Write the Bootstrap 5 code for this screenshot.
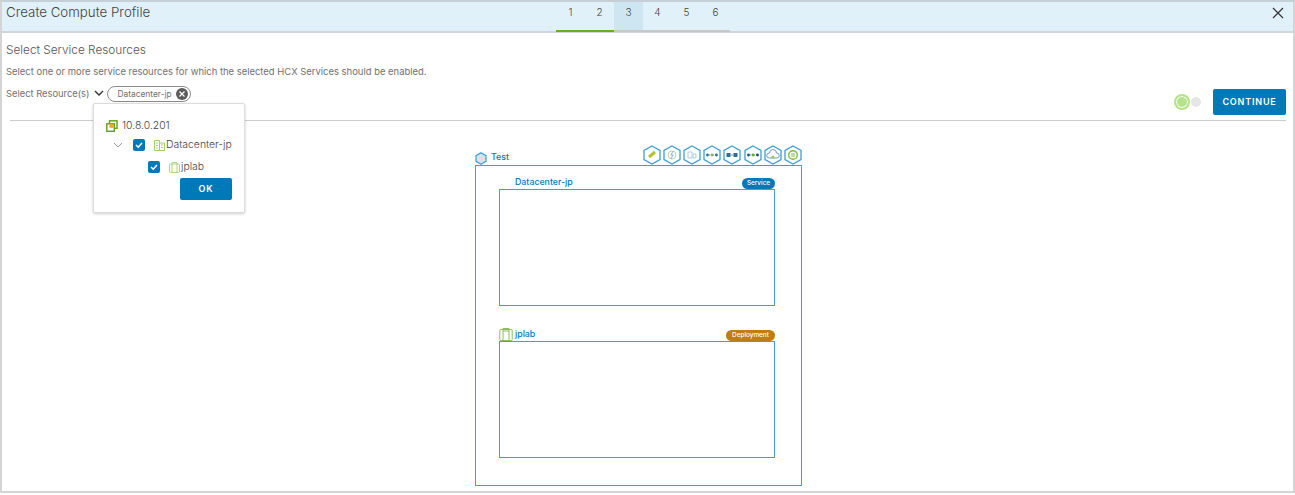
<!DOCTYPE html>
<html lang="en">
<head>
  <meta charset="UTF-8" />
  <title>Create Compute Profile</title>
  <link href="https://cdn.jsdelivr.net/npm/bootstrap@5.3.2/dist/css/bootstrap.min.css" rel="stylesheet" />
  <style>
    body {
      font-family: "Inter", "Open Sans", sans-serif;
      color: #565656;
      background: #fff;
      height: 495px;
      overflow: hidden;
    }

    .wiz-frame {
      height: 493px;
      border: 2px solid #d4d4d4;
      border-top-color: #c6ced6;
      position: relative;
    }

    .wiz-head {
      height: 29px;
      background: #e1f1f9;
      border-bottom: 2px solid #d0d6da;
      box-sizing: content-box;
    }

    .wiz-title {
      width: 554px;
      padding-left: 4px;
      font-size: 13.3px;
      font-weight: 300;
      line-height: 20px;
      color: #444;
    }

    .wiz-step {
      width: 29px;
      height: 30px;
      font-size: 10px;
      font-weight: 300;
      line-height: 20px;
      text-align: center;
      color: #444;
      border-bottom: 2px solid #c8c8c8;
      position: relative;
    }

    .wiz-step.is-done { border-bottom-color: #60b515; }
    .wiz-step.is-now { background: #cde6f2; }

    .wiz-close {
      margin-right: 8px;
      margin-top: 4px;
      width: 14px;
      height: 14px;
    }

    .wiz-body { padding: 0 7px 0 4px; }

    .sec-title {
      font-size: 11.8px;
      font-weight: 300;
      line-height: 16px;
      padding-top: 9px;
      color: #555;
    }

    .sec-note {
      font-size: 9.45px;
      line-height: 12px;
      padding-top: 8px;
      color: #707070;
    }

    .res-row { height: 38px; padding-top: 1px; }

    .res-label { font-size: 9.35px; line-height: 16px; color: #707070; margin-top: 7px; }

    .res-chevron { margin-top: 8px; margin-left: 5px; }

    .res-chip {
      margin-top: 7px;
      margin-left: 3px;
      height: 16px;
      width: 84px;
      border: 1px solid #8c8c8c;
      border-radius: 8px;
      font-size: 8.4px;
      line-height: 14px;
      padding-left: 9px;
      color: #707070;
    }

    .res-x {
      width: 12px;
      height: 12px;
      margin-right: 2px;
    }

    .dot-big {
      width: 16px;
      height: 16px;
      margin-top: 15px;
      border-radius: 50%;
      background: #b5e38a;
      border: 2px solid #b5e38a;
      box-shadow: inset 0 0 0 1px #fff;
    }

    .dot-small {
      width: 10px;
      height: 10px;
      margin-top: 18px;
      border-radius: 50%;
      background: #e6e6e6;
      margin-left: 1px;
      margin-right: 12px;
    }

    .btn-go, .btn-go:hover {
      background: #0079b8;
      color: #fff;
      border: 0;
      border-radius: 2px;
      font-size: 9px;
      font-weight: 600;
      letter-spacing: .8px;
      padding: 0;
    }

    .btn-go.is-main { width: 73px; height: 26px; margin-top: 10px; }
    .btn-go.is-ok { width: 52px; height: 22px; }

    .rule-line {
      margin: 4px 0 0 4px;
      height: 1px;
      background: #ccc;
    }

    .pop-menu {
      position: absolute;
      left: 91px;
      top: 101px;
      width: 152px;
      height: 110px;
      background: #fff;
      border: 1px solid #ddd;
      border-radius: 2px;
      box-shadow: 0 1px 3px rgba(0, 0, 0, .2);
      font-size: 10.4px;
      font-weight: 300;
      color: #444;
      z-index: 5;
    }

    .tree-row { height: 22px; line-height: 22px; }
    .tree-root { height: 20px; margin-top: 12px; margin-bottom: -2px; padding-left: 12px; }
    .tree-mid { padding-left: 19px; }
    .tree-leaf { padding-left: 54px; }
    .tree-check {
      width: 12px;
      height: 12px;
      border-radius: 2px;
      background: #0079b8;
    }
    .tree-mid .tree-check { margin-left: 10px; }
    .tree-icon { margin-left: 9px; margin-right: 1px; }
    .pop-foot { padding-right: 12px; }

    .topo-wrap {
      width: 327px;
      margin-left: 469px;
      margin-top: 23px;
    }

    .topo-head { height: 21px; }
    .topo-test { margin-top: 7px; }
    .topo-test .topo-name { margin-bottom: 2px; }
    .hex-row { gap: 2.2px; margin-top: 1px; }

    .topo-name {
      font-size: 8.8px;
      font-weight: 500;
      color: #0079b8;
      line-height: 12px;
    }

    .topo-box {
      height: 321px;
      border: 1px solid #3f9fd0;
      padding: 8px 26px 0 23px;
    }

    .topo-label { height: 15px; }
    .topo-label.is-second { margin-top: 20px; }
    .topo-label .is-indent { margin-left: 16px; margin-top: 2px; }

    .site-box {
      height: 117px;
      border: 1px solid #3f9fd0;
    }

    .tag-pill {
      height: 11px;
      border-radius: 6px;
      font-size: 6.4px;
      font-weight: 500;
      line-height: 11px;
      text-align: center;
      color: #fff;
    }

    .tag-blue { width: 33px; background: #0079b8; margin-top: 4px; }
    .tag-amber { width: 49px; background: #c27c10; margin-top: 4px; }
    .lab-gap { gap: 2px; padding-top: 1px; }
  </style>
</head>
<body>
  <svg width="0" height="0" class="d-block">
    <symbol id="hex" viewBox="0 0 18 20">
      <path d="M9 1l8 4.5v9L9 19l-8-4.5v-9z" fill="#fff" stroke="#3f9fd0" stroke-width="1.3"/>
    </symbol>
  </svg>

  <div class="wiz-frame">
    <!-- header with steps -->
    <div class="wiz-head d-flex">
      <div class="wiz-title">Create Compute Profile</div>
      <div class="d-flex">
        <div class="wiz-step is-done">1</div>
        <div class="wiz-step is-done">2</div>
        <div class="wiz-step is-now">3</div>
        <div class="wiz-step">4</div>
        <div class="wiz-step">5</div>
        <div class="wiz-step">6</div>
      </div>
      <svg class="wiz-close ms-auto" viewBox="0 0 14 14" fill="none" stroke="#333" stroke-width="1.2">
        <path d="M2 2l10 10M12 2L2 12"/>
      </svg>
    </div>

    <div class="wiz-body">
      <div class="sec-title">Select Service Resources</div>
      <div class="sec-note">Select one or more service resources for which the selected HCX Services should be enabled.</div>

      <div class="res-row d-flex align-items-start">
        <div class="res-label">Select Resource(s)</div>
        <svg class="res-chevron" width="10" height="12" viewBox="0 0 10 12" fill="none" stroke="#333" stroke-width="1.4">
          <path d="M1 4l4 4 4-4"/>
        </svg>
        <div class="res-chip d-flex justify-content-between align-items-center">
          <span>Datacenter-jp</span>
          <svg class="res-x" viewBox="0 0 12 12">
            <circle cx="6" cy="6" r="6" fill="#5c5c5c"/>
            <path d="M3.5 3.5l5 5M8.5 3.5l-5 5" stroke="#fff" stroke-width="1.2"/>
          </svg>
        </div>
        <div class="dot-big ms-auto"></div>
        <div class="dot-small"></div>
        <button class="btn btn-go is-main" type="button">CONTINUE</button>
      </div>

      <div class="rule-line"></div>

      <!-- topology -->
      <div class="topo-wrap">
        <div class="topo-head d-flex justify-content-between align-items-start">
          <div class="topo-test d-flex align-items-center gap-1">
            <svg width="12" height="13" viewBox="0 0 12 13">
              <path d="M6 .8l5 2.9v5.6l-5 2.9-5-2.9V3.7z" fill="#d7e3ea" stroke="#3f9fd0" stroke-width="1.2"/>
            </svg>
            <span class="topo-name">Test</span>
          </div>
          <div class="hex-row d-flex">
            <svg width="18" height="20" viewBox="0 0 18 20"><use href="#hex"/><path d="M6 12l6-5" stroke="#b5c22a" stroke-width="3"/></svg>
            <svg width="18" height="20" viewBox="0 0 18 20"><use href="#hex"/><circle cx="9" cy="10" r="4" fill="none" stroke="#bcd9a5"/><path d="M10 6l-2 4h2l-2 4" fill="none" stroke="#7fb8d6"/></svg>
            <svg width="18" height="20" viewBox="0 0 18 20"><use href="#hex"/><path d="M5 7h4v6H5zM10 9h3v4h-3z" fill="none" stroke="#a9cfe2"/></svg>
            <svg width="18" height="20" viewBox="0 0 18 20"><use href="#hex"/><path d="M4 10h10" stroke="#3f9fd0" stroke-dasharray="1 1"/><circle cx="4.5" cy="10" r="1.4" fill="#2a6f96"/><circle cx="9" cy="10" r="1.4" fill="#7fba3a"/><circle cx="13.5" cy="10" r="1.4" fill="#2a6f96"/></svg>
            <svg width="18" height="20" viewBox="0 0 18 20"><use href="#hex"/><rect x="3.5" y="8" width="4" height="4" fill="#2a6f96"/><rect x="10.5" y="8" width="4" height="4" fill="#2a6f96"/><path d="M7 10h4" stroke="#7fa8bf"/></svg>
            <svg width="18" height="20" viewBox="0 0 18 20"><use href="#hex"/><path d="M4 10h10" stroke="#3f9fd0" stroke-dasharray="1 1"/><circle cx="4.5" cy="10" r="1.4" fill="#1b4f72"/><circle cx="9" cy="10" r="1.4" fill="#60b515"/><circle cx="13.5" cy="10" r="1.4" fill="#1b4f72"/></svg>
            <svg width="18" height="20" viewBox="0 0 18 20"><use href="#hex"/><path d="M5 13a2.5 2.5 0 0 1 .5-5 3.5 3.5 0 0 1 7 0 2.5 2.5 0 0 1 .5 5z" fill="none" stroke="#6b9db8"/><circle cx="9" cy="12" r="1.6" fill="#9ccf6a"/></svg>
            <svg width="18" height="20" viewBox="0 0 18 20"><use href="#hex"/><circle cx="9" cy="10" r="4.3" fill="none" stroke="#7fba3a" stroke-width="1.4"/><path d="M7 9h4M7 11h4" stroke="#7fba3a"/></svg>
          </div>
        </div>

        <div class="topo-box">
          <div class="topo-label d-flex justify-content-between align-items-start">
            <span class="topo-name is-indent">Datacenter-jp</span>
            <div class="tag-pill tag-blue">Service</div>
          </div>
          <div class="site-box"></div>

          <div class="topo-label is-second d-flex justify-content-between align-items-start">
            <div class="lab-gap d-flex align-items-center">
              <svg width="14" height="14" viewBox="0 0 14 14" fill="none" stroke="#8cc152" stroke-width="1">
                <rect x=".8" y="2.5" width="12.4" height="11" rx="1"/>
                <path d="M4 13V1.5h6V13M4 4h6"/>
              </svg>
              <span class="topo-name">jplab</span>
            </div>
            <div class="tag-pill tag-amber">Deployment</div>
          </div>
          <div class="site-box"></div>
        </div>
      </div>
    </div>

    <!-- resource picker, opened over the page -->
    <div class="pop-menu">
      <div class="tree-row tree-root d-flex align-items-center">
        <svg width="12" height="12" viewBox="0 0 12 12">
          <rect x="3.5" y=".8" width="7.5" height="7.5" fill="#fff" stroke="#5aa220" stroke-width="1.4"/>
          <rect x=".8" y="3.8" width="7.5" height="7.5" fill="#fff" stroke="#5aa220" stroke-width="1.4"/>
          <rect x="3.5" y="3.8" width="4" height="4" fill="#e9a820"/>
        </svg>
        <span class="ms-1">10.8.0.201</span>
      </div>
      <div class="tree-row tree-mid d-flex align-items-center">
        <svg width="10" height="10" viewBox="0 0 10 10" fill="none" stroke="#999"><path d="M1 3l4 4 4-4"/></svg>
        <svg class="tree-check" viewBox="0 0 12 12" fill="none" stroke="#fff" stroke-width="1.5"><path d="M3 6l2.2 2.2L9 4"/></svg>
        <svg class="tree-icon" width="11" height="11" viewBox="0 0 11 11" fill="none" stroke="#9ccf6a"><path d="M.5.5h5v10h-5zM5.5 3h5v7.5h-5zM2 3h2M2 5.5h2M2 8h2M7 5h2M7 7.5h2"/></svg>
        <span>Datacenter-jp</span>
      </div>
      <div class="tree-row tree-leaf d-flex align-items-center">
        <svg class="tree-check" viewBox="0 0 12 12" fill="none" stroke="#fff" stroke-width="1.5"><path d="M3 6l2.2 2.2L9 4"/></svg>
        <svg class="tree-icon" width="11" height="11" viewBox="0 0 11 11" fill="none" stroke="#a9d584"><rect x=".5" y="2" width="10" height="8.5" rx="1"/><path d="M3 10V.5h5V10"/></svg>
        <span>jplab</span>
      </div>
      <div class="pop-foot d-flex justify-content-end">
        <button class="btn btn-go is-ok" type="button">OK</button>
      </div>
    </div>
  </div>
  <script src="https://cdn.jsdelivr.net/npm/bootstrap@5.3.2/dist/js/bootstrap.bundle.min.js"></script>
</body>
</html>
